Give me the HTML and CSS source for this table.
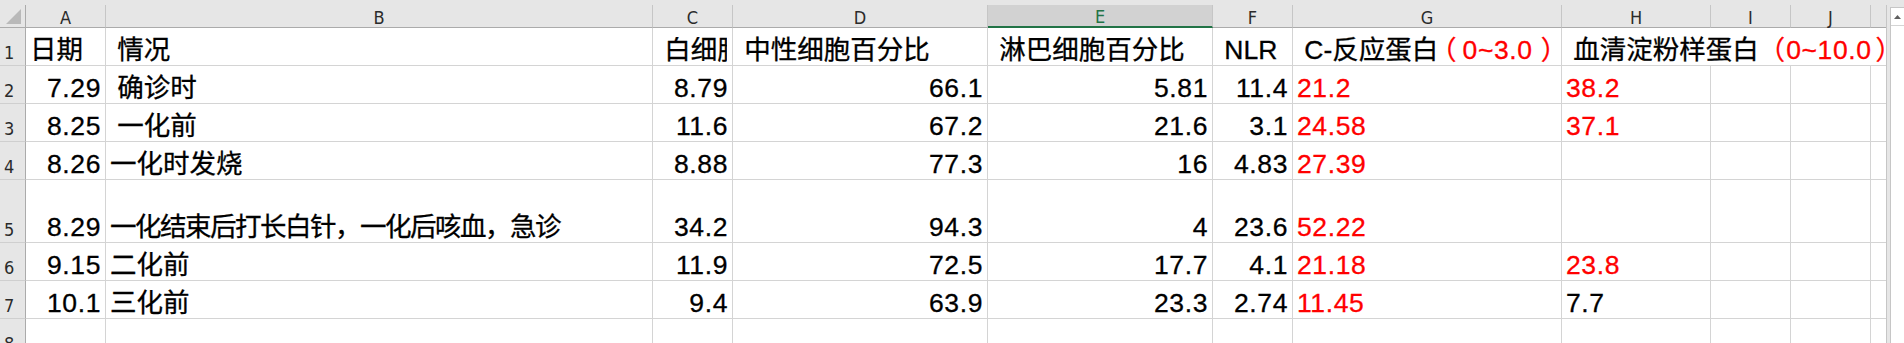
FILE: index.html
```html
<!DOCTYPE html>
<html lang="zh-CN">
<head>
<meta charset="utf-8">
<title>Sheet</title>
<link rel="stylesheet" href="styles.css">
</head>
<body>
<div class="app">
  <div class="sheet">
    <div class="corner"><svg width="16" height="16" viewBox="0 0 16 16"><polygon points="15,0 15,15 0,15" fill="#b9b9b9"/></svg></div>
    <div class="ch">A</div>
    <div class="ch">B</div>
    <div class="ch">C</div>
    <div class="ch">D</div>
    <div class="ch sel">E</div>
    <div class="ch">F</div>
    <div class="ch">G</div>
    <div class="ch">H</div>
    <div class="ch">I</div>
    <div class="ch">J</div>
    <div class="ch last"></div>

    <div class="rh">1</div>
    <div class="c t">日期</div>
    <div class="c t"> 情况</div>
    <div class="c t clip"><span class="in"> 白细胞计数</span></div>
    <div class="c t"> 中性细胞百分比</div>
    <div class="c t"> 淋巴细胞百分比</div>
    <div class="c t"> NLR</div>
    <div class="c t"> C-反应蛋白<span class="red"><span class="pl g">（</span><span class="ls">0~3.0</span><span class="pr g">）</span></span></div>
    <div class="c t span4"> 血清淀粉样蛋白<span class="red"><span class="pl h">（</span><span class="ls">0~10.0</span><span class="pr h">）</span></span></div>

    <div class="rh">2</div>
    <div class="c n v">7.29</div>
    <div class="c t"> 确诊时</div>
    <div class="c n v">8.79</div>
    <div class="c n v">66.1</div>
    <div class="c n v">5.81</div>
    <div class="c n v">11.4</div>
    <div class="c t v red">21.2</div>
    <div class="c t v red">38.2</div>
    <div class="c"></div>
    <div class="c"></div>
    <div class="c last"></div>

    <div class="rh">3</div>
    <div class="c n v">8.25</div>
    <div class="c t"> 一化前</div>
    <div class="c n v">11.6</div>
    <div class="c n v">67.2</div>
    <div class="c n v">21.6</div>
    <div class="c n v">3.1</div>
    <div class="c t v red">24.58</div>
    <div class="c t v red">37.1</div>
    <div class="c"></div>
    <div class="c"></div>
    <div class="c last"></div>

    <div class="rh">4</div>
    <div class="c n v">8.26</div>
    <div class="c t">一化时发烧</div>
    <div class="c n v">8.88</div>
    <div class="c n v">77.3</div>
    <div class="c n v">16</div>
    <div class="c n v">4.83</div>
    <div class="c t v red">27.39</div>
    <div class="c t"></div>
    <div class="c"></div>
    <div class="c"></div>
    <div class="c last"></div>

    <div class="rh">5</div>
    <div class="c n v">8.29</div>
    <div class="c t tight">一化结束后打长白针，一化后咳血，急诊</div>
    <div class="c n v">34.2</div>
    <div class="c n v">94.3</div>
    <div class="c n v">4</div>
    <div class="c n v">23.6</div>
    <div class="c t v red">52.22</div>
    <div class="c t"></div>
    <div class="c"></div>
    <div class="c"></div>
    <div class="c last"></div>

    <div class="rh">6</div>
    <div class="c n v">9.15</div>
    <div class="c t">二化前</div>
    <div class="c n v">11.9</div>
    <div class="c n v">72.5</div>
    <div class="c n v">17.7</div>
    <div class="c n v">4.1</div>
    <div class="c t v red">21.18</div>
    <div class="c t v red">23.8</div>
    <div class="c"></div>
    <div class="c"></div>
    <div class="c last"></div>

    <div class="rh">7</div>
    <div class="c n v">10.1</div>
    <div class="c t">三化前</div>
    <div class="c n v">9.4</div>
    <div class="c n v">63.9</div>
    <div class="c n v">23.3</div>
    <div class="c n v">2.74</div>
    <div class="c t v red">11.45</div>
    <div class="c t v">7.7</div>
    <div class="c"></div>
    <div class="c"></div>
    <div class="c last"></div>

    <div class="rh">8</div>
    <div class="c"></div>
    <div class="c"></div>
    <div class="c"></div>
    <div class="c"></div>
    <div class="c"></div>
    <div class="c"></div>
    <div class="c"></div>
    <div class="c"></div>
    <div class="c"></div>
    <div class="c"></div>
    <div class="c last"></div>
  </div>
  <div class="vscroll">
    <div class="vs-up"><svg width="7" height="4" viewBox="0 0 7 4"><polygon points="3.5,0 7,4 0,4" fill="#5f5f5f"/></svg></div>
    <div class="vs-track"></div>
  </div>
</div>
</body>
</html>
```
FILE: styles.css
```css
html, body {
  margin: 0;
  padding: 0;
  background: #e6e6e6;
}

.app {
  display: flex;
  width: 1904px;
  height: 343px;
  overflow: hidden;
  background: #e6e6e6;
}

.sheet {
  margin-top: 5px;
  width: 1887px;
  flex: none;
  box-sizing: border-box;
  border-right: 1px solid #c6c6c6;
  background: #ffffff;
  display: grid;
  grid-template-columns: 26px 80px 547px 80px 255px 225px 80px 269px 149px 80px 80px 15px;
  grid-template-rows: 23px 38px 38px 38px 38px 63px 38px 38px 38px;
  overflow: hidden;
  align-self: flex-start;
  height: 352px;
}

.sheet > div {
  box-sizing: border-box;
  min-width: 0;
}

.corner {
  background: #e6e6e6;
  border-right: 1px solid #ababab;
  border-bottom: 1px solid #ababab;
  display: flex;
  align-items: flex-end;
  justify-content: flex-end;
  padding: 0 3px 2px 0;
}

.corner svg {
  display: block;
}

.ch {
  background: #e6e6e6;
  border-right: 1px solid #c6c6c6;
  border-bottom: 1px solid #ababab;
  display: flex;
  align-items: flex-end;
  justify-content: center;
  font-family: "DejaVu Sans Condensed", "DejaVu Sans", sans-serif;
  font-stretch: condensed;
  font-size: 18px;
  line-height: 18px;
  color: #2b2b2b;
}

.ch.sel {
  background: #d2d2d2;
  border-bottom: 2px solid #217346;
  color: #217346;
}

.ch.last {
  border-right: none;
}

.rh {
  background: #e6e6e6;
  border-right: 1px solid #ababab;
  border-bottom: 1px solid #cfcfcf;
  display: flex;
  align-items: flex-end;
  padding: 0 0 3px 4px;
  font-family: "DejaVu Sans Condensed", "DejaVu Sans", sans-serif;
  font-stretch: condensed;
  font-size: 18px;
  line-height: 18px;
  color: #2b2b2b;
}

.c {
  border-right: 1px solid #d4d4d4;
  border-bottom: 1px solid #d4d4d4;
  display: flex;
  align-items: flex-end;
  padding: 0 5px 2px 4px;
  font-family: "Liberation Sans", "Noto Sans CJK SC", sans-serif;
  font-size: 26.5px;
  line-height: 26px;
  color: #000000;
  white-space: pre;
  -webkit-text-stroke: 0.3px currentColor;
}

.c.n {
  justify-content: flex-end;
  padding-right: 4px;
}

.c.t {
  justify-content: flex-start;
}

.c.v,
.ls {
  letter-spacing: 0.6px;
}

.c.tight {
  letter-spacing: -1.5px;
}

.pl,
.pr {
  font-feature-settings: "palt" 1;
}

.pl.g {
  margin-left: 4px;
  margin-right: 7px;
}

.pl.h {
  margin-left: 12px;
  margin-right: 2px;
}

.pr.g {
  margin-left: 9px;
}

.pr.h {
  margin-left: 5px;
}

.c.clip {
  overflow: hidden;
}

.c.clip .in {
  display: block;
  overflow: hidden;
  text-overflow: clip;
  max-width: 100%;
}

.c.span4 {
  grid-column: span 4;
  border-right: none;
  overflow: visible;
}

.c.last {
  border-right: none;
}

.red {
  color: #ff0000;
}

.vscroll {
  flex: none;
  width: 14px;
  margin-left: 3px;
  margin-top: 7px;
  box-sizing: border-box;
  border-left: 1px solid #c6c6c6;
  border-top: 1px solid #c6c6c6;
  background: #ffffff;
  display: flex;
  flex-direction: column;
}

.vs-up {
  height: 18px;
  box-sizing: border-box;
  border-bottom: 1px solid #d4d4d4;
  display: flex;
  align-items: center;
  justify-content: center;
}

.vs-up svg {
  display: block;
}

.vs-track {
  flex: 1;
  background: #ffffff;
}
```
